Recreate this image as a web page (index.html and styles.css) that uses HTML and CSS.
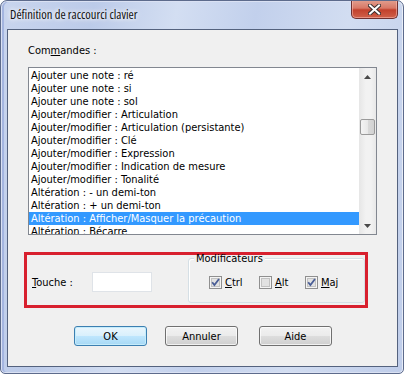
FILE: index.html
```html
<!DOCTYPE html>
<html lang="fr">
<head>
    <meta charset="UTF-8">
    <meta name="viewport" content="width=device-width, initial-scale=1.0">
    <link rel="stylesheet" href="styles.css">
</head>
<body>
    <div class="window">
        <div class="titlebar">
            <span class="title">Définition de raccourci clavier</span>
            <button class="close-btn" aria-label="Fermer">
                <svg width="13" height="11" viewBox="0 0 13 11">
                    <path d="M2 1.5 L11 9.5 M11 1.5 L2 9.5" stroke="#3a3030" stroke-width="4" stroke-linecap="square"/>
                    <path d="M2 1.5 L11 9.5 M11 1.5 L2 9.5" stroke="#fff" stroke-width="2" stroke-linecap="square"/>
                </svg>
            </button>
        </div>
        <div class="client">
            <div class="field-label">Com<u>m</u>andes :</div>
            <div class="listbox">
                <ul class="list-items">
                    <li>Ajouter une note : ré</li>
                    <li>Ajouter une note : si</li>
                    <li>Ajouter une note : sol</li>
                    <li>Ajouter/modifier : Articulation</li>
                    <li>Ajouter/modifier : Articulation (persistante)</li>
                    <li>Ajouter/modifier : Clé</li>
                    <li>Ajouter/modifier : Expression</li>
                    <li>Ajouter/modifier : Indication de mesure</li>
                    <li>Ajouter/modifier : Tonalité</li>
                    <li>Altération : - un demi-ton</li>
                    <li>Altération : + un demi-ton</li>
                    <li class="selected">Altération : Afficher/Masquer la précaution</li>
                    <li>Altération : Bécarre</li>
                </ul>
                <div class="scrollbar">
                    <div class="scroll-arrow">
                        <svg width="7" height="4" viewBox="0 0 7 4"><path d="M0 4 L3.5 0 L7 4 Z" fill="#4a4a4a"/></svg>
                    </div>
                    <div class="scroll-track">
                        <div class="scroll-thumb"></div>
                    </div>
                    <div class="scroll-arrow">
                        <svg width="7" height="4" viewBox="0 0 7 4"><path d="M0 0 L7 0 L3.5 4 Z" fill="#4a4a4a"/></svg>
                    </div>
                </div>
            </div>

            <div class="highlight-box">
                <div class="key-field">
                    <label for="keyInput"><u>T</u>ouche :</label>
                    <input type="text" id="keyInput" class="key-input">
                </div>
                <div class="groupbox">
                    <span class="legend">Modificateurs</span>
                    <div class="checks">
                        <label class="check check-ctrl">
                            <svg class="box" width="13" height="13" viewBox="0 0 13 13">
                                <rect x="0.5" y="0.5" width="12" height="12" fill="#f4f4f4" stroke="#8f8f8f"/>
                                <rect x="2.5" y="2.5" width="8" height="8" fill="#e2e2e2" stroke="#c2c2c2"/>
                                <path d="M3.2 6.2 L5.4 9 L10 3" fill="none" stroke="#4a5e96" stroke-width="1.8"/>
                            </svg>
                            <span><u>C</u>trl</span>
                        </label>
                        <label class="check check-alt">
                            <svg class="box" width="13" height="13" viewBox="0 0 13 13">
                                <rect x="0.5" y="0.5" width="12" height="12" fill="#f4f4f4" stroke="#8f8f8f"/>
                                <rect x="2.5" y="2.5" width="8" height="8" fill="#e2e2e2" stroke="#c2c2c2"/>
                            </svg>
                            <span><u>A</u>lt</span>
                        </label>
                        <label class="check">
                            <svg class="box" width="13" height="13" viewBox="0 0 13 13">
                                <rect x="0.5" y="0.5" width="12" height="12" fill="#f4f4f4" stroke="#8f8f8f"/>
                                <rect x="2.5" y="2.5" width="8" height="8" fill="#e2e2e2" stroke="#c2c2c2"/>
                                <path d="M3.2 6.2 L5.4 9 L10 3" fill="none" stroke="#4a5e96" stroke-width="1.8"/>
                            </svg>
                            <span><u>M</u>aj</span>
                        </label>
                    </div>
                </div>
            </div>

            <div class="buttons">
                <button class="btn btn-default">OK</button>
                <button class="btn btn-cancel">Annuler</button>
                <button class="btn btn-help">Aide</button>
            </div>
        </div>
    </div>
</body>
</html>
```

FILE: styles.css
```css
body {
    margin: 0;
    background: #fff;
    font-family: "DejaVu Sans Condensed", "DejaVu Sans", sans-serif;
    font-stretch: condensed;
    font-size: 11px;
    color: #000;
}
.window {
    width: 404px;
    height: 374px;
    box-sizing: border-box;
    display: flex;
    flex-direction: column;
    border: 1px solid #5d6b8c;
    border-radius: 7px 7px 5px 5px;
    background: linear-gradient(100deg, #c9d5ee 0%, #bccbe9 20%, #d3def2 38%, #c2d0ec 55%, #d2ddf1 75%, #bfcdea 100%);
    box-shadow: inset 0 0 0 1px rgba(255, 255, 255, 0.6), inset 2px 0 0 1px #a4b5e0;
    overflow: hidden;
}
.titlebar {
    height: 28px;
    display: flex;
    justify-content: space-between;
    align-items: flex-start;
    padding: 0 5px 0 9px;
}
.title {
    font-family: "Open Sans", "Noto Sans", sans-serif;
    font-size: 12.5px;
    line-height: 28px;
    color: #111;
    text-shadow: 0 0 6px #fff, 0 0 4px #fff;
}
.close-btn {
    width: 47px;
    height: 19px;
    margin: -1px 0 0 0;
    padding: 0;
    border: 1px solid #6e3030;
    border-top: none;
    border-radius: 0 0 5px 5px;
    background: linear-gradient(#e2a090 0%, #d87866 45%, #c2412c 55%, #d0614a 100%);
    box-shadow: inset 0 0 0 1px rgba(255, 200, 190, 0.5);
    display: flex;
    align-items: center;
    justify-content: center;
}
.client {
    flex: 1;
    margin: 0 5px 6px 6px;
    border: 1px solid #54627e;
    background: #f0f0f0;
    display: flex;
    flex-direction: column;
    align-items: flex-start;
}
.field-label {
    margin: 14px 0 0 20px;
    line-height: 13px;
}
.listbox {
    margin: 10px 0 0 20px;
    width: 349px;
    height: 168px;
    box-sizing: border-box;
    border: 1px solid #828790;
    background: #fff;
    display: flex;
    overflow: hidden;
}
.list-items {
    flex: 1;
    list-style: none;
    margin: 0;
    padding: 1px 0 0 0;
    overflow: hidden;
}
.list-items li {
    height: 13px;
    line-height: 13px;
    padding-left: 2px;
    white-space: nowrap;
}
.list-items li.selected {
    background: #3399ff;
    color: #fff;
}
.scrollbar {
    width: 17px;
    display: flex;
    flex-direction: column;
    background: linear-gradient(90deg, #e6e6e6, #f2f2f2 40%, #f2f2f2 70%, #e8e8e8);
}
.scroll-arrow {
    height: 17px;
    display: flex;
    align-items: center;
    justify-content: center;
}
.scroll-track {
    flex: 1;
    padding-top: 34px;
}
.scroll-thumb {
    width: 15px;
    height: 16px;
    margin-left: 1px;
    box-sizing: border-box;
    border: 1px solid #9a9a9a;
    border-radius: 2px;
    background: linear-gradient(90deg, #f4f4f4, #e9e9e9 50%, #dadada 51%, #d2d2d2);
}
.highlight-box {
    margin: 17px 0 0 16px;
    width: 344px;
    height: 56px;
    box-sizing: border-box;
    border: 3px solid #d8202e;
    display: flex;
    align-items: flex-start;
}
.key-field {
    display: flex;
    align-items: center;
    margin: 17px 0 0 5px;
}
.key-field label {
    width: 60px;
}
.key-input {
    width: 60px;
    height: 20px;
    box-sizing: border-box;
    margin: 0;
    border: 1px solid #dfe3e8;
    background: #fff;
}
.groupbox {
    position: relative;
    margin: 3px 0 0 36px;
    width: 177px;
    height: 45px;
    box-sizing: border-box;
    border: 1px solid #d5dfe5;
    border-radius: 3px;
    box-shadow: inset 1px 1px 0 #fff;
}
.legend {
    position: absolute;
    top: -4px;
    left: 5px;
    padding: 0 2px;
    line-height: 7px;
    background: #f0f0f0;
}
.checks {
    display: flex;
    align-items: center;
    padding: 17px 0 0 20px;
}
.check {
    display: flex;
    align-items: center;
    gap: 3px;
    height: 13px;
    line-height: 13px;
}
.check-ctrl {
    width: 50px;
}
.check-alt {
    width: 46px;
}
.buttons {
    display: flex;
    margin: 18px 0 0 66px;
}
.btn {
    width: 73px;
    height: 20px;
    padding: 0;
    font-family: inherit;
    font-stretch: inherit;
    font-size: 11px;
    color: #000;
    border: 1px solid #707070;
    border-radius: 3px;
    background: linear-gradient(#f2f2f2 0%, #ebebeb 48%, #dddddd 52%, #cfcfcf 100%);
    box-shadow: inset 0 0 0 1px rgba(255, 255, 255, 0.7);
}
.btn-default {
    border-color: #3c7fb1;
    background: linear-gradient(#eaf6fd 0%, #d9f0fc 48%, #bee6fd 52%, #a7d9f5 100%);
    box-shadow: inset 0 0 0 1px #c5ecfb;
}
.btn-cancel {
    margin-left: 18px;
}
.btn-help {
    margin-left: 21px;
}
```
